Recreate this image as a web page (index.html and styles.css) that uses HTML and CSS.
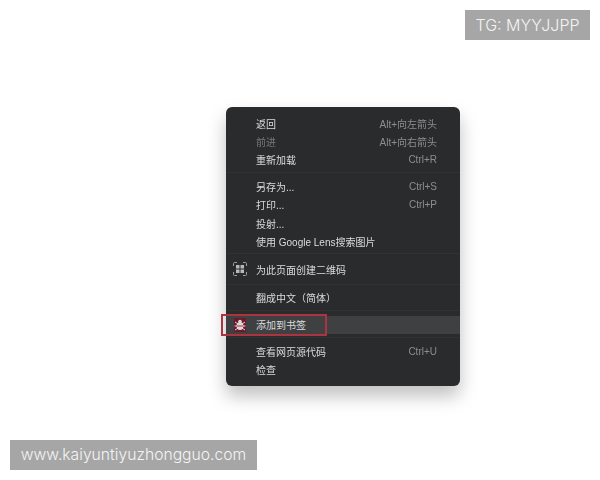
FILE: index.html
```html
<!DOCTYPE html>
<html lang="zh">
<head>
  <meta charset="UTF-8" />
  <title>添加到书签</title>
  <link rel="stylesheet" href="styles.css">
</head>
<body>
  <div class="tag tag-top">TG: MYYJJPP</div>

  <div class="menu">
    <div class="row"><span>返回</span><span class="key">Alt+向左箭头</span></div>
    <div class="row off"><span>前进</span><span class="key">Alt+向右箭头</span></div>
    <div class="row"><span>重新加载</span><span class="key">Ctrl+R</span></div>
    <div class="sep"></div>
    <div class="row"><span>另存为...</span><span class="key">Ctrl+S</span></div>
    <div class="row"><span>打印...</span><span class="key">Ctrl+P</span></div>
    <div class="row"><span>投射...</span></div>
    <div class="row"><span>使用 Google Lens搜索图片</span></div>
    <div class="sep sep-tight"></div>
    <div class="row row-tall">
      <svg class="icon" viewBox="0 0 14 14" fill="none" stroke="#9c9c9c" stroke-width="1">
        <path d="M4 .5H1.500a1 1 0 0 0-1 1V4M10 .5h2.500a1 1 0 0 1 1 1V4M4 13.500H1.500a1 1 0 0 1-1-1V10M10 13.500h2.500a1 1 0 0 0 1-1V10"/>
        <rect x="3" y="3" width="3.500" height="3.500" fill="#b8b8b8" stroke="none"/>
        <rect x="7.500" y="3" width="3.500" height="3.500" fill="#b8b8b8" stroke="none"/>
        <rect x="3" y="7.500" width="3.500" height="3.500" fill="#b8b8b8" stroke="none"/>
        <rect x="7.500" y="7.500" width="3.500" height="3.500" fill="#b8b8b8" stroke="none"/>
      </svg>
      <span>为此页面创建二维码</span>
    </div>
    <div class="sep sep-tight"></div>
    <div class="row"><span>翻成中文（简体）</span></div>
    <div class="sep"></div>
    <div class="row active">
      <div class="mark"></div>
      <svg class="icon" viewBox="0 0 14 14">
        <rect x="1" y="0" width="12" height="14" fill="#6a1a28"/>
        <ellipse cx="7" cy="8" rx="3.400" ry="4" fill="#e4d6d6"/>
        <circle cx="7" cy="3.500" r="1.800" fill="#e4d6d6"/>
        <path d="M2 4l3 2M12 4L9 6M1.500 8h3M12.500 8h-3M2 12l3-2M12 12L9 10" stroke="#e4d6d6" stroke-width="1" fill="none"/>
        <path d="M4 8h6" stroke="#6a1a28" stroke-width=".8"/>
      </svg>
      <span>添加到书签</span>
    </div>
    <div class="sep"></div>
    <div class="row"><span>查看网页源代码</span><span class="key">Ctrl+U</span></div>
    <div class="row"><span>检查</span></div>
  </div>

  <div class="tag tag-bottom">www.kaiyuntiyuzhongguo.com</div>
</body>
</html>
```

FILE: styles.css
```css
body {
  margin: 0;
  width: 600px;
  height: 480px;
  padding: 107px 0 0 226px;
  box-sizing: border-box;
  overflow: hidden;
  background: #fff;
  font-family: "Liberation Sans", "Noto Sans CJK SC", sans-serif;
}

.tag {
  position: absolute;
  height: 30px;
  line-height: 30px;
  background: #a6a6a6;
  color: #f4f4f4;
  font-family: "Inter", "Liberation Sans", sans-serif;
  font-weight: 300;
  text-align: center;
}

.tag-top {
  top: 10px;
  left: 465px;
  width: 125px;
  font-size: 16px;
}

.tag-bottom {
  top: 440px;
  left: 10px;
  width: 247px;
  font-size: 15.700px;
}

.menu {
  width: 234px;
  height: 279px;
  padding: 7px 0;
  box-sizing: border-box;
  background: #2a2b2d;
  border-radius: 6px;
  box-shadow: 0 10px 18px rgba(0, 0, 0, 0.25);
  color: #dcdcdc;
  font-size: 10px;
  filter: blur(0.3px);
}

.row {
  position: relative;
  display: flex;
  align-items: center;
  justify-content: space-between;
  height: 18.200px;
  padding: 0 23px 0 30px;
}

.row-tall {
  height: 24px;
  justify-content: flex-start;
}

.off {
  color: #77787a;
}

.key {
  color: #8d8e90;
}

.sep {
  height: 1px;
  margin: 3px 0 5px;
  background: #313235;
}

.sep-tight {
  margin: 3px 0;
}

.active {
  justify-content: flex-start;
  background: #3f4042;
}

.icon {
  position: absolute;
  left: 7px;
  top: 50%;
  width: 14px;
  height: 14px;
  margin-top: -7px;
}

.mark {
  position: absolute;
  left: -5px;
  top: -2px;
  width: 106px;
  height: 22px;
  box-sizing: border-box;
  border: 2px solid #ac3340;
}
```
